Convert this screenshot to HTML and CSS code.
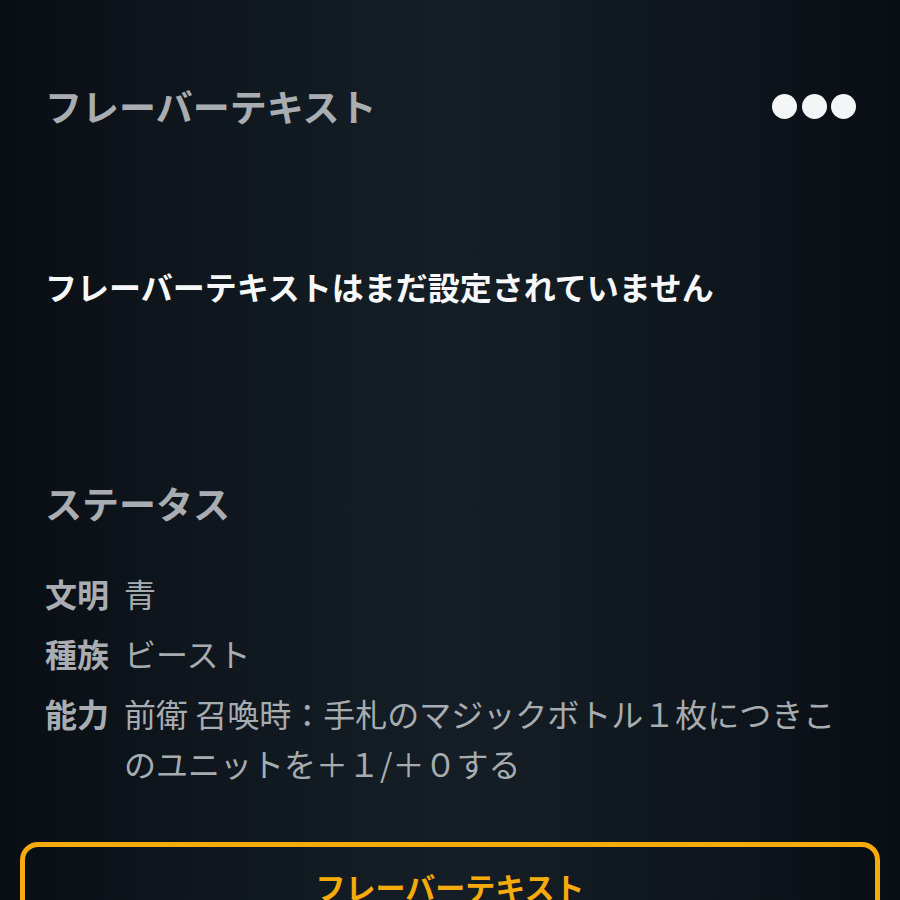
FILE: index.html
```html
<!DOCTYPE html>
<html lang="ja">
<head>
<meta charset="utf-8">
<title>フレーバーテキスト</title>
<link rel="stylesheet" href="styles.css">
</head>
<body>
<div class="page">
  <div class="content">
    <header class="header">
      <h1 class="title">フレーバーテキスト</h1>
      <div class="dots" aria-label="menu">
        <span class="dot"></span><span class="dot"></span><span class="dot"></span>
      </div>
    </header>
    <p class="message">フレーバーテキストはまだ設定されていません</p>
    <h2 class="section-title">ステータス</h2>
    <dl class="stats">
      <div class="row"><dt class="label">文明</dt><dd class="value">青</dd></div>
      <div class="row"><dt class="label">種族</dt><dd class="value">ビースト</dd></div>
      <div class="row"><dt class="label">能力</dt><dd class="value">前衛 召喚時：手札のマジックボトル１枚につきこのユニットを＋１/＋０する</dd></div>
    </dl>
  </div>
  <div class="button">フレーバーテキスト</div>
</div>
</body>
</html>
```

FILE: styles.css
```css
html, body {
  margin: 0;
  padding: 0;
  height: 100%;
}
body {
  background: linear-gradient(90deg, #090e14 0%, #111920 30%, #151e26 50%, #111920 70%, #090e14 100%);
  font-family: "Noto Sans CJK JP", "Noto Sans", sans-serif;
  overflow: hidden;
}
.page {
  padding: 0 20px;
}
.content {
  padding: 0 24px 0 25px;
}
.header {
  display: flex;
  align-items: center;
  justify-content: space-between;
  margin-top: 84px;
  height: 44px;
}
.title {
  margin: 0;
  font-size: 37px;
  line-height: 44px;
  font-weight: 700;
  color: #a9adb2;
}
.dots {
  display: flex;
  gap: 4.5px;
}
.dot {
  width: 25px;
  height: 25px;
  border-radius: 50%;
  background: #f3f5f7;
}
.message {
  margin: 138px 0 0;
  font-size: 32px;
  line-height: 40px;
  font-weight: 700;
  color: #f5f7f8;
}
.section-title {
  margin: 175px 0 0;
  font-size: 37px;
  line-height: 44px;
  font-weight: 700;
  color: #a9adb2;
}
.stats {
  margin: 43px 0 0;
  display: flex;
  flex-direction: column;
  gap: 10px;
}
.row {
  display: grid;
  grid-template-columns: auto 1fr;
  column-gap: 15px;
  font-size: 32px;
  line-height: 50px;
}
.label {
  margin: 0;
  font-weight: 700;
  color: #a9adb2;
}
.value {
  margin: 0;
  font-weight: 400;
  color: #a7acb1;
}
.button {
  margin-top: 54px;
  border: 5px solid #f6aa0b;
  border-radius: 18px;
  padding: 19px 0 40px;
  text-align: center;
  font-size: 30px;
  line-height: 40px;
  font-weight: 700;
  color: #f6aa0b;
}
```
